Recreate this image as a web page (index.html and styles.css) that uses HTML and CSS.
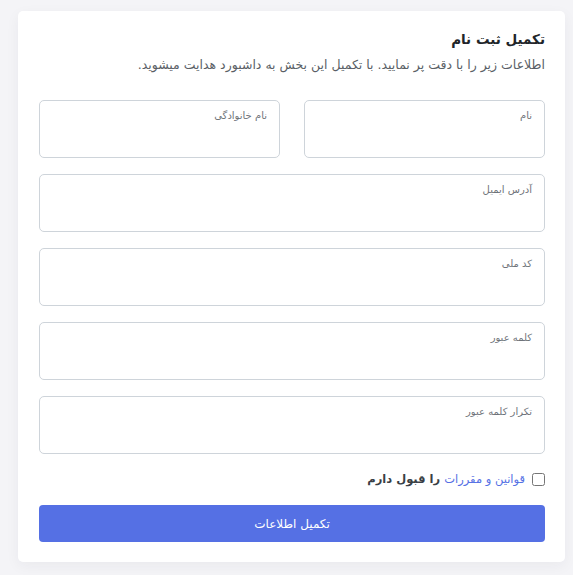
FILE: index.html
```html
<!DOCTYPE html>
<html lang="fa" dir="rtl">
<head>
    <meta charset="UTF-8">
    <meta name="viewport" content="width=device-width, initial-scale=1.0">
    <title>تکمیل ثبت نام</title>
    <link rel="stylesheet" href="styles.css">
</head>
<body>
    <div class="card">
        <h1>تکمیل ثبت نام</h1>
        <p class="lead">اطلاعات زیر را با دقت پر نمایید. با تکمیل این بخش به داشبورد هدایت میشوید.</p>

        <form class="form">
            <div class="row">
                <div class="field"><label>نام</label><input type="text"></div>
                <div class="field"><label>نام خانوادگی</label><input type="text"></div>
            </div>
            <div class="field"><label>آدرس ایمیل</label><input type="email"></div>
            <div class="field"><label>کد ملی</label><input type="text"></div>
            <div class="field"><label>کلمه عبور</label><input type="password"></div>
            <div class="field"><label>تکرار کلمه عبور</label><input type="password"></div>

            <label class="check">
                <input type="checkbox">
                <span><a href="#">قوانین و مقررات</a> را قبول دارم</span>
            </label>

            <button type="button" class="submit">تکمیل اطلاعات</button>
        </form>
    </div>
</body>
</html>
```

FILE: styles.css
```css
body {
    margin: 0;
    padding: 11px 8px 14px 18px;
    background: #f4f4f7;
    font-family: "DejaVu Sans", "Noto Sans", sans-serif;
    color: #212529;
}
.card {
    background: #fff;
    border-radius: 5px;
    box-shadow: 0 4px 14px rgba(30, 30, 60, 0.05);
    padding: 18px 20px 20px 21px;
}
h1 {
    margin: 0;
    font-size: 13.5px;
    font-weight: bold;
    line-height: 20px;
}
.lead {
    margin: 6px 0 0;
    font-size: 12.5px;
    line-height: 20px;
    color: #5a5f66;
}
.form {
    margin-top: 25px;
    display: flex;
    flex-direction: column;
    gap: 16px;
}
.row {
    display: grid;
    grid-template-columns: 1fr 1fr;
    gap: 24px;
}
.field {
    position: relative;
}
.field label {
    position: absolute;
    top: 10px;
    right: 13px;
    font-size: 10px;
    color: #6f747a;
}
.field input {
    display: block;
    box-sizing: border-box;
    width: 100%;
    height: 58px;
    border: 1px solid #ced4da;
    border-radius: 5px;
    background: #fff;
}
.check {
    display: flex;
    align-items: center;
    gap: 7px;
    font-size: 11.5px;
    font-weight: bold;
    color: #3a3f45;
    margin: 2px 0 3px;
}
.check input {
    margin: 0;
    width: 13px;
    height: 13px;
}
.check a {
    color: #5570e4;
    font-weight: normal;
    text-decoration: none;
}
.submit {
    height: 37px;
    border: 0;
    border-radius: 4px;
    background: #5570e4;
    color: #fff;
    font-family: inherit;
    font-size: 12px;
}
```
